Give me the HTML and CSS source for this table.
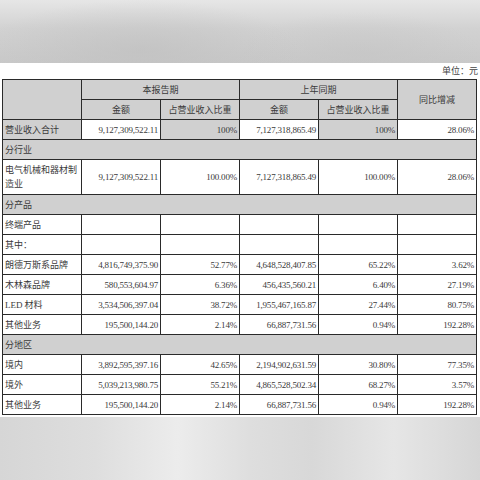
FILE: index.html
```html
<!DOCTYPE html>
<html lang="zh">
<head>
<meta charset="utf-8">
<title>营业收入构成</title>
<link rel="stylesheet" href="styles.css">
</head>
<body>
<div class="band band-top"></div>
<div class="page">
  <div class="unit">单位：元</div>
  <table class="rev">
    <colgroup><col><col><col><col><col><col></colgroup>
    <tr class="hd">
      <td rowspan="2" class="g"></td>
      <td colspan="2" class="g c">本报告期</td>
      <td colspan="2" class="g c">上年同期</td>
      <td rowspan="2" class="g c">同比增减</td>
    </tr>
    <tr class="hd">
      <td class="g c">金额</td>
      <td class="g c">占营业收入比重</td>
      <td class="g c">金额</td>
      <td class="g c">占营业收入比重</td>
    </tr>
    <tr>
      <td class="g l">营业收入合计</td>
      <td class="n">9,127,309,522.11</td>
      <td class="g n">100%</td>
      <td class="n">7,127,318,865.49</td>
      <td class="g n">100%</td>
      <td class="n">28.06%</td>
    </tr>
    <tr><td colspan="6" class="g l">分行业</td></tr>
    <tr class="tall">
      <td class="l wrap">电气机械和器材制造业</td>
      <td class="n">9,127,309,522.11</td>
      <td class="n">100.00%</td>
      <td class="n">7,127,318,865.49</td>
      <td class="n">100.00%</td>
      <td class="n">28.06%</td>
    </tr>
    <tr><td colspan="6" class="g l">分产品</td></tr>
    <tr><td class="l">终端产品</td><td></td><td></td><td></td><td></td><td></td></tr>
    <tr><td class="l">其中：</td><td></td><td></td><td></td><td></td><td></td></tr>
    <tr>
      <td class="l">朗德万斯系品牌</td>
      <td class="n">4,816,749,375.90</td>
      <td class="n">52.77%</td>
      <td class="n">4,648,528,407.85</td>
      <td class="n">65.22%</td>
      <td class="n">3.62%</td>
    </tr>
    <tr>
      <td class="l">木林森品牌</td>
      <td class="n">580,553,604.97</td>
      <td class="n">6.36%</td>
      <td class="n">456,435,560.21</td>
      <td class="n">6.40%</td>
      <td class="n">27.19%</td>
    </tr>
    <tr>
      <td class="l"><span class="lat">LED</span> 材料</td>
      <td class="n">3,534,506,397.04</td>
      <td class="n">38.72%</td>
      <td class="n">1,955,467,165.87</td>
      <td class="n">27.44%</td>
      <td class="n">80.75%</td>
    </tr>
    <tr>
      <td class="l">其他业务</td>
      <td class="n">195,500,144.20</td>
      <td class="n">2.14%</td>
      <td class="n">66,887,731.56</td>
      <td class="n">0.94%</td>
      <td class="n">192.28%</td>
    </tr>
    <tr><td colspan="6" class="g l">分地区</td></tr>
    <tr>
      <td class="l">境内</td>
      <td class="n">3,892,595,397.16</td>
      <td class="n">42.65%</td>
      <td class="n">2,194,902,631.59</td>
      <td class="n">30.80%</td>
      <td class="n">77.35%</td>
    </tr>
    <tr>
      <td class="l">境外</td>
      <td class="n">5,039,213,980.75</td>
      <td class="n">55.21%</td>
      <td class="n">4,865,528,502.34</td>
      <td class="n">68.27%</td>
      <td class="n">3.57%</td>
    </tr>
    <tr>
      <td class="l">其他业务</td>
      <td class="n">195,500,144.20</td>
      <td class="n">2.14%</td>
      <td class="n">66,887,731.56</td>
      <td class="n">0.94%</td>
      <td class="n">192.28%</td>
    </tr>
  </table>
</div>
<div class="band band-bottom"></div>
</body>
</html>
```
FILE: styles.css
```css
html, body {
  margin: 0;
  padding: 0;
}
body {
  width: 480px;
  height: 480px;
  display: flex;
  flex-direction: column;
  background: #ffffff;
  font-family: "Liberation Serif", "Noto Sans CJK SC", serif;
  color: #3a3a3a;
  overflow: hidden;
}
.band {
  flex: none;
}
.band-top {
  height: 63px;
  background:
    radial-gradient(ellipse 160px 50px at 140px 50px, rgba(190,190,190,0.6), rgba(190,190,190,0)),
    radial-gradient(ellipse 120px 40px at 360px 52px, rgba(195,195,195,0.5), rgba(195,195,195,0)),
    linear-gradient(to bottom, #e6e6e6 0%, #d2d2d2 45%, #c9c9c9 100%);
}
.band-bottom {
  flex: 1;
  background:
    linear-gradient(to right, #d6d6d6 0%, #dedede 20%, #ececec 37%, #dedede 52%, #d8d8d8 65%, #e6e6e6 82%, #d6d6d6 100%);
}
.page {
  flex: none;
  padding: 0 4px 2px 2px;
  background: #ffffff;
}
.unit {
  height: 16px;
  line-height: 16px;
  text-align: right;
  font-family: "Noto Sans CJK SC", sans-serif;
  font-size: 9px;
  color: #444;
  margin-right: -2px;
}
.rev {
  width: 474px;
  table-layout: fixed;
  border-collapse: collapse;
  border: 1px solid #2a2a2a;
}
.rev col {
  width: 79px;
}
.rev tr {
  height: 20px;
}
.rev tr.tall {
  height: 35px;
}
.rev td {
  border: 1px solid #2a2a2a;
  padding: 0 2px;
  font-size: 9px;
  line-height: 12px;
  white-space: nowrap;
  overflow: hidden;
  vertical-align: middle;
}
.rev td.g {
  background: #d0d0d0;
}
.rev td.c {
  text-align: center;
  font-family: "Noto Sans CJK SC", sans-serif;
  font-size: 9px;
}
.rev td.l {
  text-align: left;
  font-family: "Noto Sans CJK SC", sans-serif;
  font-size: 9px;
}
.rev td.wrap {
  white-space: normal;
  line-height: 14px;
  word-break: break-all;
}
.rev td.n {
  text-align: right;
  letter-spacing: -0.2px;
}
.lat {
  font-family: "Liberation Serif", serif;
  font-size: 9px;
}
```
